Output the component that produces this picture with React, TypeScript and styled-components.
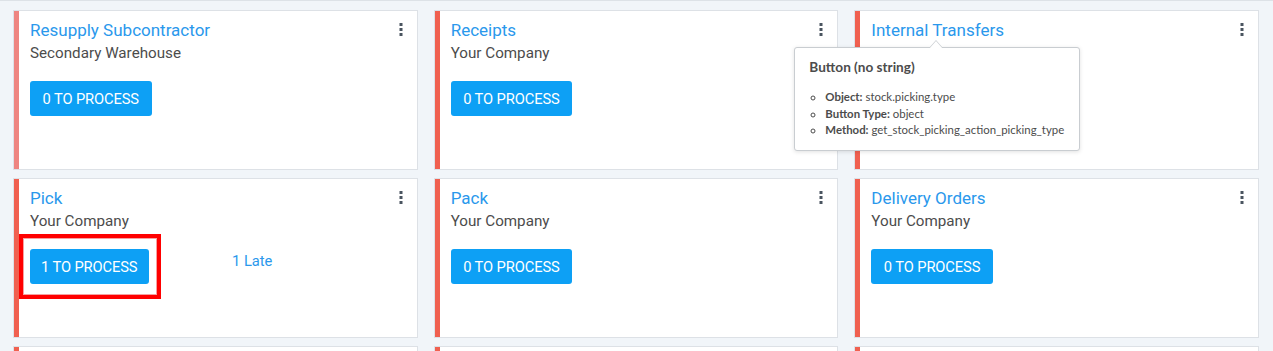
import React from "react";
import styled, { createGlobalStyle, css } from "styled-components";

const Global = createGlobalStyle`
  html, body { margin: 0; padding: 0; overflow: hidden; }
  body {
    background: #f1f5f9;
    font-family: Roboto, "Open Sans", sans-serif;
    color: #4c4c4c;
  }
`;

const Board = styled.div`
  border-top: 1px solid #dde2e7;
  padding: 9px 14px 0 13px;
  display: grid;
  grid-template-columns: repeat(3, 1fr);
  grid-auto-rows: 160px;
  column-gap: 16px;
  row-gap: 8px;
`;

const Card = styled.div<{ $accent: string }>`
  position: relative;
  box-sizing: border-box;
  background: #fff;
  border: 1px solid #dde1e6;
  border-left: none;
  box-shadow: inset 1px 0 0 #dde1e6;
  display: flex;
  &::before {
    content: "";
    flex: 0 0 6px;
    background: ${(p) => p.$accent};
    box-shadow: inset 1px 0 0 #dde1e6;
  }
`;

const Body = styled.div`
  flex: 1;
  padding: 7px 14px 0 11px;
  display: flex;
  flex-direction: column;
`;

const Header = styled.div`
  display: flex;
  justify-content: space-between;
  align-items: flex-start;
`;

const Title = styled.a`
  font-size: 17px;
  line-height: 24px;
  color: #2a98ec;
  text-decoration: none;
`;

const Kebab = styled.span`
  display: flex;
  padding-top: 5px;
`;

const Subtitle = styled.div`
  margin-top: 1px;
  font-size: 15.2px;
  line-height: 21px;
  color: #4c4c4c;
`;

const Actions = styled.div`
  margin-top: 17px;
  display: grid;
  grid-template-columns: 202px 1fr;
  align-items: center;
`;

const BtnWrap = styled.div<{ $marked?: boolean }>`
  position: relative;
  justify-self: start;
  ${(p) =>
    p.$marked &&
    css`
      &::after {
        content: "";
        position: absolute;
        left: -11px;
        top: -15px;
        right: -12px;
        bottom: -15px;
        border: 4px solid #ff0000;
        box-shadow: inset 0 0 0 1px #f7a0a0;
        pointer-events: none;
      }
    `}
`;

const ProcessBtn = styled.button<{ $narrow?: boolean }>`
  background: #0da0f5;
  color: #fff;
  border: none;
  border-radius: 3px;
  height: 35px;
  padding: 0 ${(p) => (p.$narrow ? "11px" : "12.5px")};
  font-family: Roboto, sans-serif;
  font-size: 14.7px;
  letter-spacing: -0.1px;
  cursor: pointer;
`;

const LateLink = styled.a`
  font-size: 14.7px;
  color: #2a98ec;
  text-decoration: none;
  margin-top: -12px;
`;

const Tooltip = styled.div`
  position: absolute;
  left: -60px;
  top: 36px;
  width: 286px;
  box-sizing: border-box;
  background: #fff;
  border: 1px solid #c9cdd1;
  border-radius: 3px;
  box-shadow: 0 1px 4px rgba(0, 0, 0, 0.12);
  padding: 10px 14px 11px 14px;
  font-family: Lato, "Open Sans", sans-serif;
  color: #4c4c4c;
  z-index: 5;
  &::before,
  &::after {
    content: "";
    position: absolute;
    left: 134px;
    border: 7px solid transparent;
    border-top: none;
  }
  &::before {
    top: -8px;
    border-bottom: 8px solid #c9cdd1;
  }
  &::after {
    top: -7px;
    border-bottom: 8px solid #fff;
  }
`;

const TipTitle = styled.div`
  font-weight: 700;
  font-size: 13.6px;
  line-height: 18px;
`;

const TipList = styled.ul`
  margin: 13px 0 0 0;
  padding-left: 16px;
  list-style: circle;
  font-size: 11.4px;
  line-height: 16.5px;
`;

const TipKey = styled.b`
  font-weight: 700;
`;

const Dots = () => (
  <svg width="4" height="13" viewBox="0 0 4 13">
    <rect x="0.5" y="0" width="3" height="3" fill="#4a5560" />
    <rect x="0.5" y="5" width="3" height="3" fill="#4a5560" />
    <rect x="0.5" y="10" width="3" height="3" fill="#4a5560" />
  </svg>
);

type CardData = {
  title?: string;
  sub?: string;
  count?: number;
  accent: string;
  late?: string;
  marked?: boolean;
  tip?: boolean;
};

const cards: CardData[] = [
  { title: "Resupply Subcontractor", sub: "Secondary Warehouse", count: 0, accent: "#ee8581" },
  { title: "Receipts", sub: "Your Company", count: 0, accent: "#f06050" },
  { title: "Internal Transfers", sub: "Your Company", count: 0, accent: "#f06050", tip: true },
  { title: "Pick", sub: "Your Company", count: 1, accent: "#f06050", late: "1 Late", marked: true },
  { title: "Pack", sub: "Your Company", count: 0, accent: "#f06050" },
  { title: "Delivery Orders", sub: "Your Company", count: 0, accent: "#f06050" },
  { accent: "#f06050" },
  { accent: "#f06050" },
  { accent: "#f06050" },
];

export default function App() {
  return (
    <>
      <Global />
      <Board>
        {cards.map((c, i) => (
          <Card key={i} $accent={c.accent}>
            {c.title && (
              <Body>
                <Header>
                  <Title href="#">{c.title}</Title>
                  <Kebab>
                    <Dots />
                  </Kebab>
                </Header>
                {!c.tip && <Subtitle>{c.sub}</Subtitle>}
                {!c.tip && (
                  <Actions>
                    <BtnWrap $marked={c.marked}>
                      <ProcessBtn $narrow={c.count === 1}>{c.count} TO PROCESS</ProcessBtn>
                    </BtnWrap>
                    {c.late && <LateLink href="#">{c.late}</LateLink>}
                  </Actions>
                )}
              </Body>
            )}
            {c.tip && (
              <Tooltip>
                <TipTitle>Button (no string)</TipTitle>
                <TipList>
                  <li>
                    <TipKey>Object:</TipKey> stock.picking.type
                  </li>
                  <li>
                    <TipKey>Button Type:</TipKey> object
                  </li>
                  <li>
                    <TipKey>Method:</TipKey> get_stock_picking_action_picking_type
                  </li>
                </TipList>
              </Tooltip>
            )}
          </Card>
        ))}
      </Board>
    </>
  );
}
